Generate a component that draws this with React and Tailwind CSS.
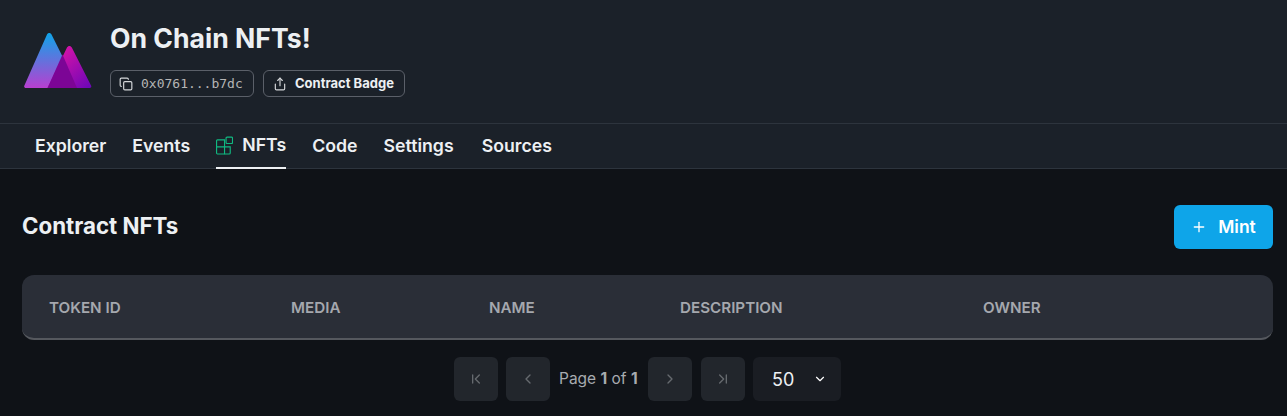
import React from "react";
import { ChevronDown, ChevronLeft, ChevronRight, ChevronFirst, ChevronLast, Copy, Plus, Share } from "lucide-react";

const tabs = ["Explorer", "Events", "NFTs", "Code", "Settings", "Sources"];
const columns = [
  { label: "TOKEN ID", width: "w-[242px]" },
  { label: "MEDIA", width: "w-[198px]" },
  { label: "NAME", width: "w-[191px]" },
  { label: "DESCRIPTION", width: "w-[303px]" },
  { label: "OWNER", width: "" },
];

function Logo() {
  return (
    <svg width="68" height="56" viewBox="0 0 68 56" fill="none">
      <defs>
        <linearGradient id="left" x1="0" y1="0" x2="0" y2="1">
          <stop offset="0" stopColor="#0ea5e9" />
          <stop offset="1" stopColor="#b83fd0" />
        </linearGradient>
        <linearGradient id="right" x1="0" y1="0" x2="1" y2="1">
          <stop offset="0.2" stopColor="#d613a8" />
          <stop offset="1" stopColor="#6a06b8" />
        </linearGradient>
      </defs>
      <path d="M23 2.5C24 0.5 26.5 0.5 27.5 2.5L53 53.5C53.6 55 53 56 51.5 56H2C0.5 56 -0.3 54.8 0.4 53.5Z" fill="url(#left)" />
      <path d="M43 15.5C44 13.4 46.8 13.4 47.8 15.5L67 53.5C67.8 55 67 56 65.5 56H23.5Z" fill="url(#right)" />
      <path d="M38.5 22.5L53 56H23.5Z" fill="#7c0596" />
    </svg>
  );
}

function GridIcon() {
  return (
    <svg width="18" height="19" viewBox="0 0 18 19" fill="none" stroke="#10b981" strokeWidth="1.2">
      <path d="M1.5 3.5H9V18.5H1.5A1 1 0 0 1 0.6 17.5V4.5A1 1 0 0 1 1.5 3.5Z" />
      <path d="M0.6 11H15V17.5A1 1 0 0 1 14 18.5H9" />
      <rect x="10.6" y="0.6" width="6.8" height="6.8" rx="1" />
    </svg>
  );
}

function PageButton({ children }) {
  return (
    <button className="flex h-11 w-11 items-center justify-center rounded-md bg-[#22262c] text-[#666a6f]">
      {children}
    </button>
  );
}

export default function App() {
  return (
    <div className="h-[416px] overflow-hidden bg-[#0f1217] font-['Inter',sans-serif] text-[#edf0f3]">
      <div className="flex h-[124px] border-b border-[#2d343d] bg-[#1b2129] pl-6">
        <div className="mt-[32px]">
          <Logo />
        </div>
        <div className="ml-[18px] mt-[21px]">
          <h1 className="text-[26.6px] font-bold leading-[34px]">On Chain NFTs!</h1>
          <div className="mt-[15px] flex gap-[9px]">
            <div className="flex h-[27px] w-[144px] items-center rounded-md border border-[#5b6069] pl-[8px]">
              <Copy size={14} className="text-[#d5d7da]" />
              <span className="ml-[8px] font-['DejaVu_Sans_Mono',monospace] text-[13px] text-[#b5b5b5]">
                0x0761...b7dc
              </span>
            </div>
            <div className="flex h-[27px] w-[142px] items-center rounded-md border border-[#5b6069] pl-[9px]">
              <Share size={14} className="text-[#d5d7da]" />
              <span className="ml-[8px] text-[13px] font-bold">Contract Badge</span>
            </div>
          </div>
        </div>
      </div>

      <div className="flex h-[45px] gap-[26px] border-b border-[#2d343d] bg-[#1b2129] pl-[35px]">
        {tabs.map((tab) =>
          tab === "NFTs" ? (
            <div
              key={tab}
              className="flex h-[45px] w-[70px] items-center gap-[9px] border-b-2 border-[#edf0f3] pb-[1px] text-[17.7px] font-semibold"
            >
              <GridIcon />
              <span>{tab}</span>
            </div>
          ) : (
            <div key={tab} className="flex h-[44px] items-center text-[17.7px] font-semibold last:ml-[2px]">
              {tab}
            </div>
          )
        )}
      </div>

      <div className="px-[14px] pl-[22px]">
        <div className="mt-9 flex items-center justify-between">
          <h2 className="pb-[2px] text-[22.3px] font-bold">Contract NFTs</h2>
          <button className="flex h-11 w-[99px] items-center justify-center gap-[11px] rounded-md bg-[#0ea5e9] text-[17.5px] font-semibold text-white">
            <Plus size={16} />
            Mint
          </button>
        </div>

        <div className="mt-[26px] flex h-[65px] items-center rounded-xl border-b-2 border-[#55585e] bg-[#2a2e37] pl-[27px] pt-1">
          {columns.map((col) => (
            <div key={col.label} className={`${col.width} text-[15.2px] font-semibold text-[#a5a8ae]`}>
              {col.label}
            </div>
          ))}
        </div>

        <div className="mt-[17px] flex items-center justify-center gap-2">
          <PageButton>
            <ChevronFirst size={16} />
          </PageButton>
          <PageButton>
            <ChevronLeft size={16} />
          </PageButton>
          <div className="ml-[1px] w-[81px] whitespace-nowrap text-[15.5px] text-[#a7abb0]">
            Page <span className="font-bold">1</span> of <span className="font-bold">1</span>
          </div>
          <PageButton>
            <ChevronRight size={16} />
          </PageButton>
          <div className="ml-[1px]">
            <PageButton>
              <ChevronLast size={16} />
            </PageButton>
          </div>
          <div className="flex h-11 w-[88px] items-center rounded-md bg-[#1a1d23] pl-[19px]">
            <span className="text-[18px] text-[#edf0f3]">50</span>
            <ChevronDown size={14} className="ml-[19px] text-white" />
          </div>
        </div>
      </div>
    </div>
  );
}
